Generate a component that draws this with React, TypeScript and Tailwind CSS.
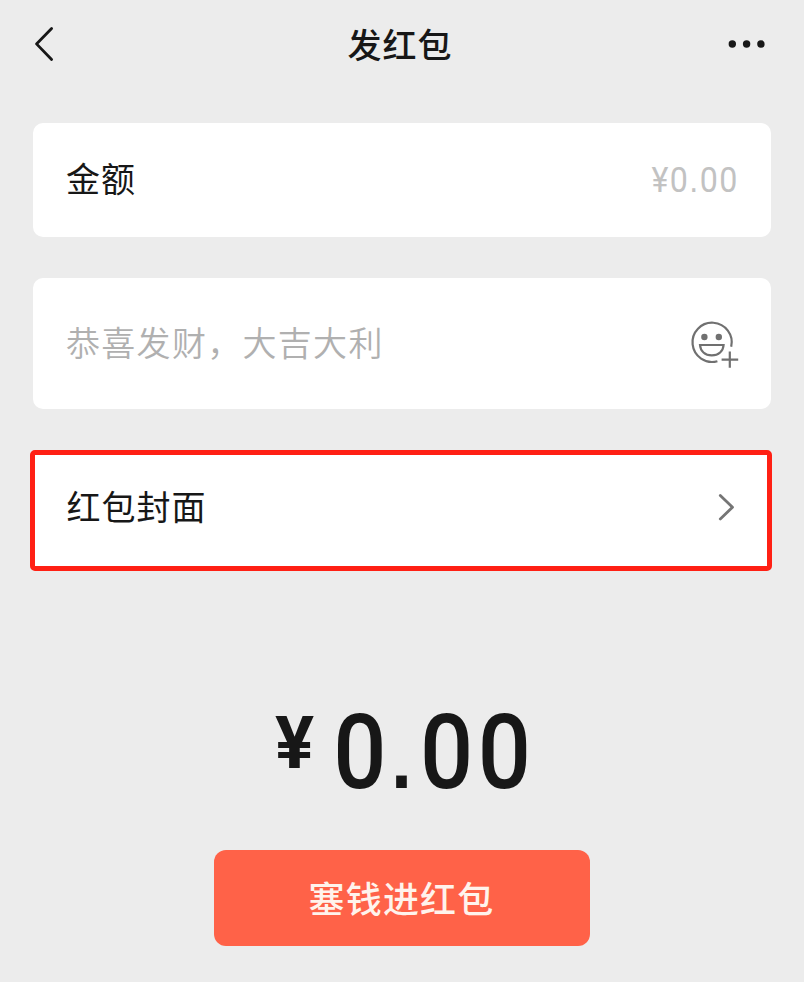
function BackIcon() {
  return (
    <svg className="h-10 w-6" viewBox="0 0 24 40" fill="none" stroke="#171717" strokeWidth="2.8" strokeLinecap="round" strokeLinejoin="round">
      <path d="M20.6 4.5 5.5 19.9l15.1 15.6" />
    </svg>
  );
}

function MoreIcon() {
  return (
    <svg className="h-10 w-10" viewBox="0 0 40 40" fill="#171717">
      <circle cx="6.3" cy="20" r="3.7" />
      <circle cx="20.6" cy="20" r="3.7" />
      <circle cx="34.9" cy="20" r="3.7" />
    </svg>
  );
}

function EmojiAddIcon() {
  return (
    <svg className="h-[50px] w-[50px]" viewBox="0 0 50 50" fill="none" stroke="#707070" strokeWidth="2.2">
      <path d="M41.2 28.8A19.6 19.6 0 1 0 27.4 43.2" />
      <path d="M10 27h23.600c-.4 6-4.900 10.400-11.800 10.400s-11.400-4.400-11.800-10.400z" />
      <path d="M39.8 33.400v16.400M31.600 41.600h16.600" />
      <circle cx="14.4" cy="19" r="3.2" fill="#707070" stroke="none" />
      <circle cx="28.800" cy="19" r="3.2" fill="#707070" stroke="none" />
    </svg>
  );
}

function ChevronIcon() {
  return (
    <svg className="h-8 w-5" viewBox="0 0 20 32" fill="none" stroke="#757575" strokeWidth="2.8" strokeLinecap="round" strokeLinejoin="round">
      <path d="M4.3 4.5 16.5 16.2 4.3 27.9" />
    </svg>
  );
}

export default function App() {
  return (
    <main className="flex h-[982px] w-[804px] flex-col bg-[#ececec] font-['Noto_Sans_CJK_SC',sans-serif] text-[#171717]">
      <header className="flex h-[88px] items-center justify-between pr-[38px] pl-[31px]">
        <button className="w-10" aria-label="返回">
          <BackIcon />
        </button>
        <h1 className="pl-[3px] text-[34px] leading-[48px] font-medium tracking-[1px]">发红包</h1>
        <button className="w-10" aria-label="更多">
          <MoreIcon />
        </button>
      </header>

      <section className="mt-[34.5px] flex flex-col px-[33px]">
        <div className="flex h-[114.5px] items-center justify-between rounded-[10px] bg-white px-[33px]">
          <span className="pb-[3px] text-[34px] leading-[48px] tracking-[1px]">金额</span>
          <span className="origin-right translate-x-px translate-y-px scale-x-92 font-['Roboto',sans-serif] text-[35px] leading-[48px] tracking-[1.5px] text-[#c2c2c2]">
            ¥0<span className="font-['Liberation_Sans',sans-serif]">.</span>00
          </span>
        </div>

        <div className="mt-[41px] flex h-[130.5px] items-center justify-between rounded-[10px] bg-white pr-[31px] pl-[33px]">
          <span className="pb-[2px] text-[34px] leading-[48px] font-[350] tracking-[1.3px] text-[#b0b0b0]">恭喜发财，大吉大利</span>
          <EmojiAddIcon />
        </div>

        <div className="mt-[41px] -mr-[0.5px] -ml-[3.5px] flex h-[121.5px] items-center justify-between rounded-[5px] border-5 border-[#ff2014] bg-white pr-[31px] pb-[6px] pl-[32px]">
          <span className="pb-[3px] text-[34px] leading-[48px] tracking-[1px]">红包封面</span>
          <ChevronIcon />
        </div>
      </section>

      <div className="mt-[120px] flex h-[120px] items-start justify-center pl-[18px] font-['Roboto',sans-serif]">
        <span className="mt-[9px] mr-[8px] text-[73px] leading-[86px] font-bold">¥</span>
        <span className="mt-[2px] scale-x-90 text-[104px] leading-[120px] font-medium tracking-[5px]">
          0<span className="font-['Liberation_Sans',sans-serif] text-[84px] leading-none font-bold tracking-[9px]">.</span>00
        </span>
      </div>

      <button className="mt-[39px] ml-[213.5px] h-[96px] w-[376px] rounded-[12px] bg-[#ff6248] pb-px text-[36px] leading-[95px] font-medium tracking-[1.2px] text-[#fff3ec]">
        塞钱进红包
      </button>
    </main>
  );
}
